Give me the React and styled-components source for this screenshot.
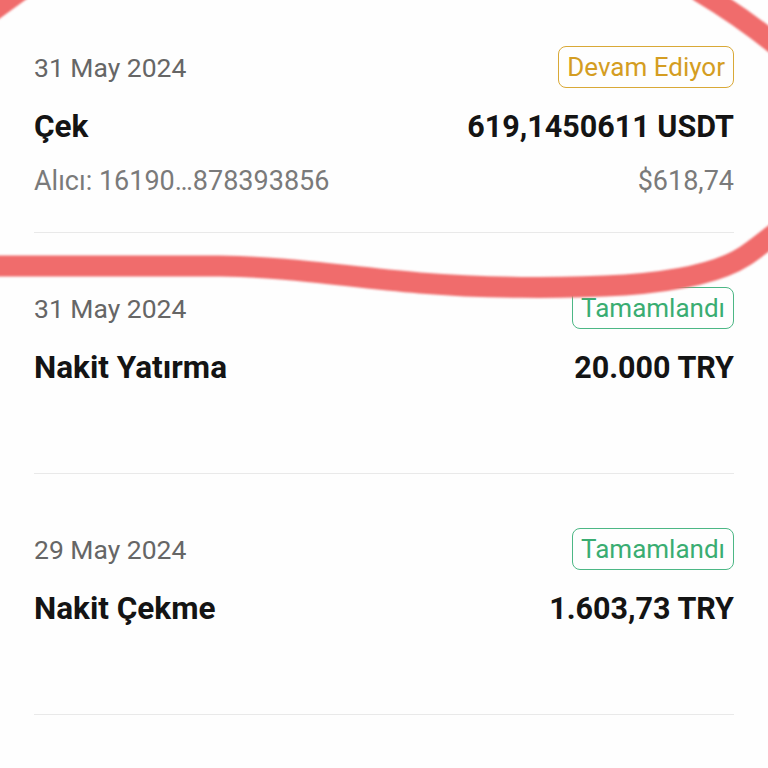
import styled, { createGlobalStyle } from 'styled-components';

const GlobalStyle = createGlobalStyle`
  html, body {
    margin: 0;
    padding: 0;
    background: #fefefe;
    overflow: hidden;
  }
  body {
    font-family: Roboto, "Noto Sans", sans-serif;
  }
`;

const transactions = [
  {
    date: '31 May 2024',
    status: 'pending',
    title: 'Çek',
    amount: '619,1450611 USDT',
    sub: 'Alıcı: 16190…878393856',
    subValue: '$618,74',
  },
  { date: '31 May 2024', status: 'done', title: 'Nakit Yatırma', amount: '20.000 TRY' },
  { date: '29 May 2024', status: 'done', title: 'Nakit Çekme', amount: '1.603,73 TRY' },
];

const statusLabel = {
  pending: 'Devam Ediyor',
  done: 'Tamamlandı',
};

const App = () => {
  return (
    <Screen>
      <GlobalStyle />
      <List>
        {transactions.map((tx, i) => (
          <Item key={i}>
            <TopRow>
              <DateText>{tx.date}</DateText>
              <Badge $status={tx.status}>{statusLabel[tx.status]}</Badge>
            </TopRow>
            <MainRow>
              <Title>{tx.title}</Title>
              <Amount>{tx.amount}</Amount>
            </MainRow>
            {tx.sub && (
              <SubRow>
                <SubText>{tx.sub}</SubText>
                <SubText>{tx.subValue}</SubText>
              </SubRow>
            )}
          </Item>
        ))}
      </List>
      <Scribble viewBox="0 0 768 768" width="768" height="768">
        <defs>
          <filter id="soft" x="-5%" y="-5%" width="110%" height="110%">
            <feGaussianBlur stdDeviation="1.2" />
          </filter>
        </defs>
        <g
          fill="none"
          stroke="#f06c6c"
          strokeWidth="21"
          strokeLinecap="round"
          strokeLinejoin="round"
          filter="url(#soft)"
        >
          <path d="M -12 14 L 24 -12" />
          <path d="M 700 -8 C 722 5, 748 22, 780 48" />
          <path d="M -10 266 L 220 266 C 290 267, 340 276, 420 283 C 480 288, 560 289, 625 285 C 680 281, 722 271, 745 256 C 756 249, 766 240, 780 230" />
        </g>
      </Scribble>
    </Screen>
  );
};

const Screen = styled.div`
  position: relative;
  width: 768px;
  height: 768px;
  overflow: hidden;
  background: #fefefe;
`;

const List = styled.div`
  margin-top: -8px;
  padding: 0 34px;
`;

const Item = styled.div`
  box-sizing: border-box;
  height: 241px;
  padding-top: 54px;
  border-bottom: 1px solid #e9e9e9;
`;

const Row = styled.div`
  display: flex;
  justify-content: space-between;
  align-items: center;
`;

const TopRow = styled(Row)`
  height: 42px;
`;

const MainRow = styled(Row)`
  margin-top: 20px;
  height: 36px;
`;

const SubRow = styled(Row)`
  margin-top: 21px;
  height: 32px;
`;

const DateText = styled.span`
  font-size: 26.5px;
  color: #666;
`;

const Badge = styled.span`
  box-sizing: border-box;
  height: 42px;
  display: inline-flex;
  align-items: center;
  padding: 0 8px;
  border-radius: 8px;
  font-size: 26px;
  border: 1.5px solid ${(p) => (p.$status === 'pending' ? '#d9a937' : '#4cb785')};
  color: ${(p) => (p.$status === 'pending' ? '#d49d22' : '#3aad72')};
`;

const Title = styled.span`
  font-size: 31.5px;
  font-weight: 700;
  color: #141414;
`;

const Amount = styled.span`
  font-size: 30.5px;
  font-weight: 700;
  color: #141414;
`;

const SubText = styled.span`
  font-size: 27px;
  color: #7a7a7a;
`;

const Scribble = styled.svg`
  position: absolute;
  top: 0;
  left: 0;
  pointer-events: none;
`;

export default App;
